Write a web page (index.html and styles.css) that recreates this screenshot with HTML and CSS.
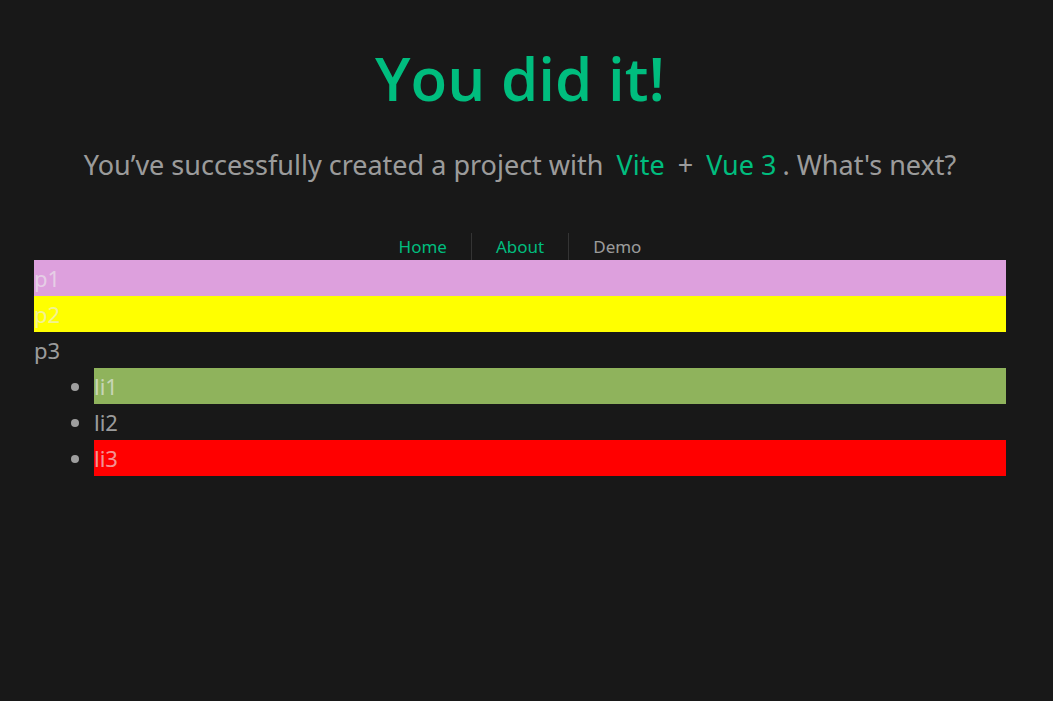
FILE: index.html
```html
<!DOCTYPE html>
<html lang="en">
<head>
<meta charset="utf-8">
<title>Vite App</title>
<link rel="stylesheet" href="styles.css">
</head>
<body>
<div class="app">
  <header class="header">
    <h1 class="title">You did it!</h1>
    <h3 class="subtitle">You’ve successfully created a project with <a class="link" href="#vite">Vite</a> + <a class="link" href="#vue">Vue 3</a>. What's next?</h3>
    <nav class="nav">
      <a class="nav-link" href="#home">Home</a>
      <a class="nav-link" href="#about">About</a>
      <a class="nav-link nav-link-active" href="#demo">Demo</a>
    </nav>
  </header>
  <main class="demo">
    <p class="row plum">p1</p>
    <p class="row yellow">p2</p>
    <p class="row">p3</p>
    <ul class="list">
      <li class="row green">li1</li>
      <li class="row">li2</li>
      <li class="row red">li3</li>
    </ul>
  </main>
</div>
</body>
</html>
```
FILE: styles.css
```css
* { box-sizing: border-box; margin: 0; font-weight: normal; }
body {
  min-height: 100vh;
  background: #181818;
  color: rgba(235, 235, 235, 0.64);
  font-family: "Segoe UI", "Noto Sans", "Open Sans", sans-serif;
  font-size: 22px;
  line-height: 36px;
}
.app { padding: 34px 47px 34px 34px; }
.header { text-align: center; }
.title { font-family: "Segoe UI", "Open Sans", sans-serif; font-size: 60px; font-weight: 600; line-height: 88px; color: #00bd7e; }
.subtitle { margin-top: 20px; font-size: 27px; line-height: 45px; }
.link { padding: 6px; color: #00bd7e; text-decoration: none; }
.nav { display: flex; justify-content: center; margin-top: 46px; font-size: 17px; line-height: 27px; }
.nav-link { padding: 0 24px; border-left: 1px solid rgba(84, 84, 84, 0.48); color: #00bd7e; text-decoration: none; }
.nav-link:first-child { border-left: 0; }
.nav-link-active { color: inherit; }
.list { padding-left: 60px; }
.plum { background: plum; }
.yellow { background: yellow; }
.green { background: #8fb35c; }
.red { background: red; }
```
